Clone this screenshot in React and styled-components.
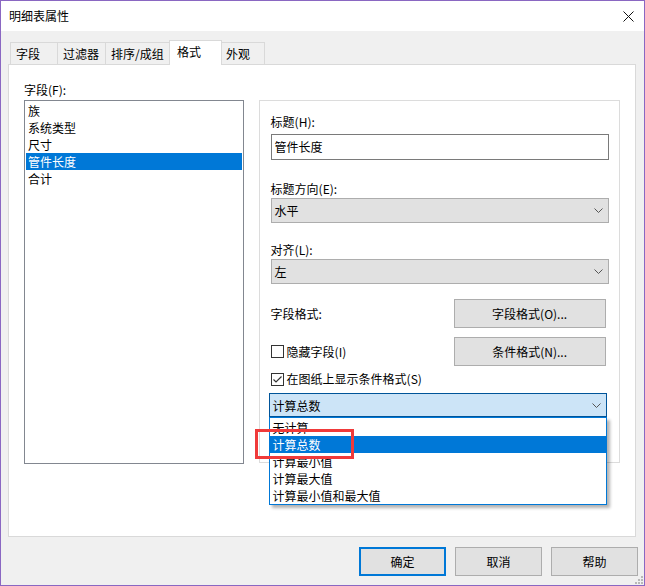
import React from "react";
import styled, { createGlobalStyle } from "styled-components";

const GlobalStyle = createGlobalStyle`
  html, body {
    margin: 0;
    padding: 0;
    background: #ffffff;
  }
  body {
    font-family: "Noto Sans CJK SC", "Noto Sans", "Liberation Sans", sans-serif;
    font-size: 12px;
    color: #000;
  }
`;

const Window = styled.div`
  position: relative;
  width: 645px;
  height: 586px;
  box-sizing: border-box;
  border: 1px solid #8a67c2;
  background: #f0f0f0;
  display: flex;
  flex-direction: column;
`;

const TitleBar = styled.div`
  height: 30px;
  flex: none;
  background: #ffffff;
  display: flex;
  align-items: center;
  padding-left: 8px;
  padding-right: 8px;
`;

const Title = styled.span`
  font-size: 12px;
  line-height: 16px;
`;

const Close = styled.div`
  margin-left: auto;
  width: 11px;
  height: 11px;
  margin-right: 2px;
  display: flex;
`;

const Body = styled.div`
  flex: 1;
  display: flex;
  flex-direction: column;
  padding: 9px 0 0 7px;
`;

const TabStrip = styled.div`
  display: flex;
  align-items: flex-end;
  height: 24px;
  margin-left: 2px;
  position: relative;
  z-index: 1;
`;

const Tab = styled.div`
  box-sizing: border-box;
  width: ${(p) => p.$w}px;
  margin-left: ${(p) => p.$ml || 0}px;
  height: ${(p) => (p.$active ? 25 : 22)}px;
  margin-bottom: ${(p) => (p.$active ? -1 : 0)}px;
  border: 1px solid #d9d9d9;
  border-bottom: none;
  background: ${(p) => (p.$active ? "#ffffff" : "#f0f0f0")};
  padding-left: ${(p) => (p.$active ? 7 : 5)}px;
  line-height: ${(p) => (p.$active ? 21 : 21)}px;
  position: relative;
  z-index: ${(p) => (p.$active ? 2 : 1)};
  white-space: nowrap;
`;

const Panel = styled.div`
  box-sizing: border-box;
  width: 628px;
  height: 473px;
  border: 1px solid #d9d9d9;
  background: #ffffff;
  padding: 17px 15px 0 15px;
  display: flex;
`;

const LeftCol = styled.div`
  width: 220px;
  display: flex;
  flex-direction: column;
`;

const Label = styled.div`
  line-height: 16px;
  height: 16px;
  margin-top: ${(p) => p.$mt || 0}px;
  margin-bottom: ${(p) => p.$mb || 0}px;
  white-space: nowrap;
`;

const ListBox = styled.div`
  box-sizing: border-box;
  height: 364px;
  border: 1px solid #828790;
  padding: 1px;
`;

const ListItem = styled.div`
  height: 17px;
  line-height: 17px;
  padding-left: 2px;
  background: ${(p) => (p.$sel ? "#0078d7" : "transparent")};
  color: ${(p) => (p.$sel ? "#ffffff" : "#000")};
`;

const GroupBox = styled.div`
  box-sizing: border-box;
  width: 362px;
  height: 363px;
  margin-top: 18px;
  margin-left: 15px;
  border: 1px solid #dcdcdc;
  padding: 13px 0 0 11px;
  display: flex;
  flex-direction: column;
`;

const TextBox = styled.div`
  box-sizing: border-box;
  width: 338px;
  height: 26px;
  margin-top: 4px;
  border: 1px solid #7a7a7a;
  background: #fff;
  padding-left: 3px;
  line-height: 24px;
`;

const Combo = styled.div`
  box-sizing: border-box;
  width: 338px;
  height: 25px;
  margin-top: ${(p) => p.$mt || 1}px;
  border: 1px solid #adadad;
  background: #e1e1e1;
  padding: 0 5px 0 3px;
  display: flex;
  align-items: center;
  justify-content: space-between;
`;

const Row = styled.div`
  width: 335px;
  margin-top: ${(p) => p.$mt}px;
  display: flex;
  align-items: center;
  justify-content: space-between;
`;

const Button = styled.div`
  box-sizing: border-box;
  width: ${(p) => p.$w}px;
  height: 29px;
  border: ${(p) => (p.$default ? "2px solid #0078d7" : "1px solid #adadad")};
  background: #e1e1e1;
  display: flex;
  align-items: center;
  justify-content: center;
`;

const CheckLine = styled.div`
  display: flex;
  align-items: center;
  gap: 3px;
  height: 16px;
  line-height: 16px;
`;

const Box = styled.div`
  box-sizing: border-box;
  width: 13px;
  height: 13px;
  border: 1px solid #333;
  background: #fff;
  display: flex;
`;

const OpenComboWrap = styled.div`
  position: relative;
  margin-top: 6px;
  margin-left: -2px;
  width: 338px;
`;

const OpenCombo = styled.div`
  box-sizing: border-box;
  height: 24px;
  border: 1px solid #005499;
  background: #cce4f7;
  padding: 0 5px 0 3px;
  display: flex;
  align-items: center;
  justify-content: space-between;
`;

const DropList = styled.div`
  position: absolute;
  left: 0;
  top: 24px;
  width: 338px;
  height: 88px;
  box-sizing: border-box;
  border: 1px solid #0078d7;
  background: #fff;
  padding-top: 1px;
  box-shadow: 3px 3px 3px rgba(0, 0, 0, 0.3);
  z-index: 5;
`;

const DropItem = styled.div`
  height: 17px;
  line-height: 17px;
  padding-left: 3px;
  background: ${(p) => (p.$sel ? "#0078d7" : "transparent")};
  color: ${(p) => (p.$sel ? "#ffffff" : "#000")};
`;

const Highlight = styled.div`
  position: absolute;
  left: -14px;
  top: 36px;
  width: 99px;
  height: 30px;
  box-sizing: border-box;
  border: 3px solid #f03a3a;
  z-index: 6;
`;

const Footer = styled.div`
  display: flex;
  justify-content: flex-end;
  gap: 9px;
  margin-top: 10px;
  padding-right: 6px;
`;

const Grip = styled.div`
  position: absolute;
  right: 1px;
  bottom: 1px;
  width: 8px;
  height: 8px;
  display: flex;
`;

const Chevron = () => (
  <svg width="9" height="5" viewBox="0 0 9 5">
    <path d="M0.5 0.5 L4.5 4.5 L8.5 0.5" fill="none" stroke="#555" strokeWidth="1" />
  </svg>
);

const Check = ({ checked }) => (
  <Box>
    {checked && (
      <svg width="11" height="11" viewBox="0 0 11 11">
        <path d="M1.5 5.5 L4 8 L9.5 2.5" fill="none" stroke="#333" strokeWidth="1.2" />
      </svg>
    )}
  </Box>
);

const fields = ["族", "系统类型", "尺寸", "管件长度", "合计"];
const calcs = ["无计算", "计算总数", "计算最小值", "计算最大值", "计算最小值和最大值"];

export default function App() {
  return (
    <>
      <GlobalStyle />
      <Window>
        <TitleBar>
          <Title>明细表属性</Title>
          <Close>
            <svg width="11" height="11" viewBox="0 0 11 11">
              <path d="M0.5 0.5 L10.5 10.5 M10.5 0.5 L0.5 10.5" stroke="#111" strokeWidth="1" />
            </svg>
          </Close>
        </TitleBar>
        <Body>
          <TabStrip>
            <Tab $w={48}>字段</Tab>
            <Tab $w={49} $ml={-1}>过滤器</Tab>
            <Tab $w={65} $ml={-1}>排序/成组</Tab>
            <Tab $w={53} $ml={-1} $active>格式</Tab>
            <Tab $w={45} $ml={-2}>外观</Tab>
          </TabStrip>
          <Panel>
            <LeftCol>
              <Label $mb={2}>字段(F):</Label>
              <ListBox>
                {fields.map((f) => (
                  <ListItem key={f} $sel={f === "管件长度"}>
                    {f}
                  </ListItem>
                ))}
              </ListBox>
            </LeftCol>
            <GroupBox>
              <Label>标题(H):</Label>
              <TextBox>管件长度</TextBox>
              <Label $mt={21}>标题方向(E):</Label>
              <Combo>
                <span>水平</span>
                <Chevron />
              </Combo>
              <Label $mt={19}>对齐(L):</Label>
              <Combo>
                <span>左</span>
                <Chevron />
              </Combo>
              <Row $mt={15}>
                <span>字段格式:</span>
                <Button $w={152}>字段格式(O)...</Button>
              </Row>
              <Row $mt={9}>
                <CheckLine>
                  <Check />
                  <span>隐藏字段(I)</span>
                </CheckLine>
                <Button $w={152}>条件格式(N)...</Button>
              </Row>
              <Row $mt={5}>
                <CheckLine>
                  <Check checked />
                  <span>在图纸上显示条件格式(S)</span>
                </CheckLine>
              </Row>
              <OpenComboWrap>
                <OpenCombo>
                  <span>计算总数</span>
                  <Chevron />
                </OpenCombo>
                <DropList>
                  {calcs.map((c) => (
                    <DropItem key={c} $sel={c === "计算总数"}>
                      {c}
                    </DropItem>
                  ))}
                </DropList>
                <Highlight />
              </OpenComboWrap>
            </GroupBox>
          </Panel>
          <Footer>
            <Button $w={87} $default>确定</Button>
            <Button $w={87}>取消</Button>
            <Button $w={87}>帮助</Button>
          </Footer>
        </Body>
        <Grip>
          <svg width="8" height="8" viewBox="0 0 8 8">
            <rect x="6" y="0" width="2" height="2" fill="#b8b8b8" />
            <rect x="3" y="3" width="2" height="2" fill="#b8b8b8" />
            <rect x="6" y="3" width="2" height="2" fill="#b8b8b8" />
            <rect x="0" y="6" width="2" height="2" fill="#b8b8b8" />
            <rect x="3" y="6" width="2" height="2" fill="#b8b8b8" />
            <rect x="6" y="6" width="2" height="2" fill="#b8b8b8" />
          </svg>
        </Grip>
      </Window>
    </>
  );
}
